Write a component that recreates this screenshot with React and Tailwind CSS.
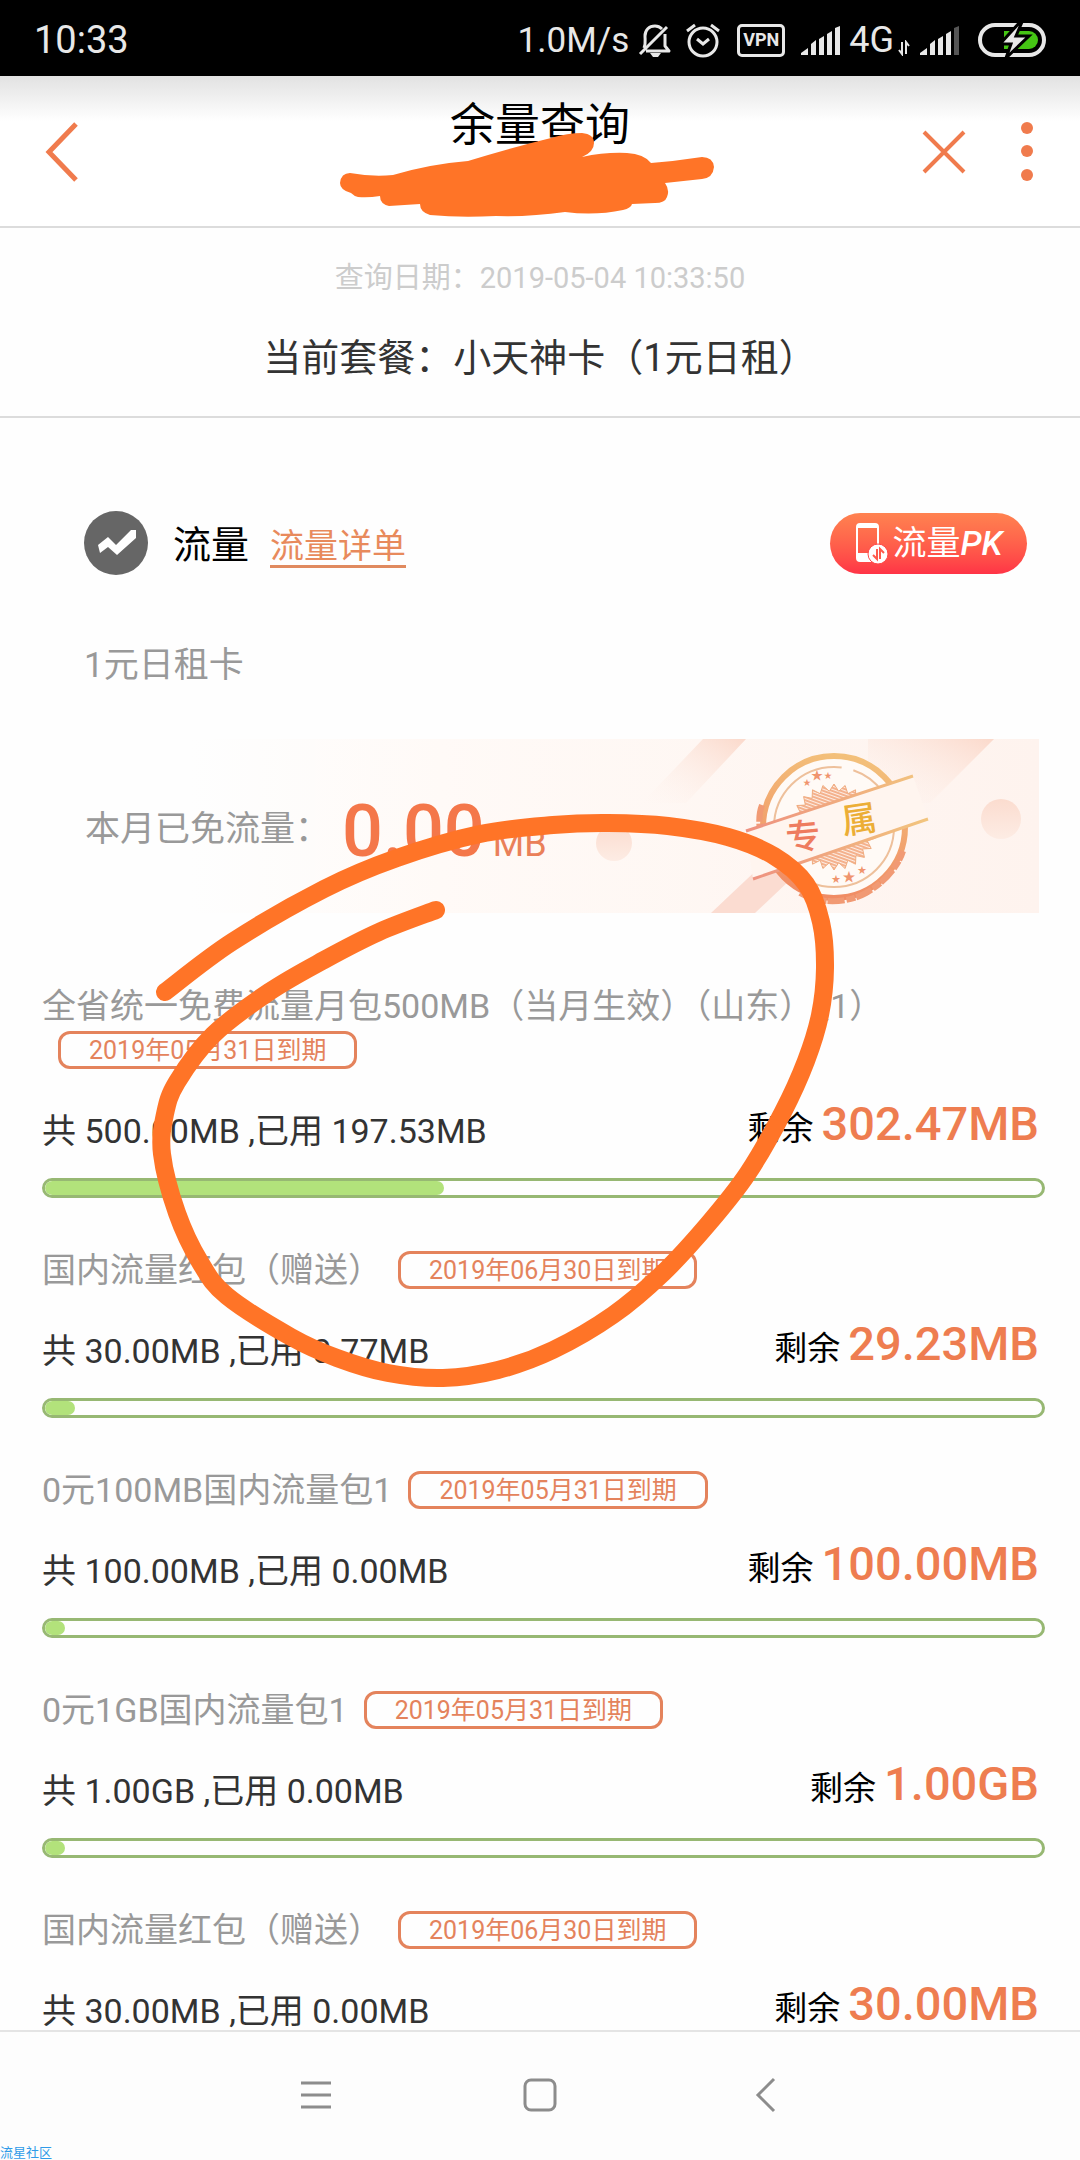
const plans = [
  { name: "全省统一免费流量月包500MB（当月生效）（山东）（1）", expires: "2019年05月31日到期", total: "500.00MB", used: "197.53MB", left: "302.47MB", percent: 40 },
  { name: "国内流量红包（赠送）", expires: "2019年06月30日到期", total: "30.00MB", used: "0.77MB", left: "29.23MB", percent: 3 },
  { name: "0元100MB国内流量包1", expires: "2019年05月31日到期", total: "100.00MB", used: "0.00MB", left: "100.00MB", percent: 0 },
  { name: "0元1GB国内流量包1", expires: "2019年05月31日到期", total: "1.00GB", used: "0.00MB", left: "1.00GB", percent: 0 },
  { name: "国内流量红包（赠送）", expires: "2019年06月30日到期", total: "30.00MB", used: "0.00MB", left: "30.00MB", percent: 0 },
];

const circlePoints = [
  [165, 992], [232, 942], [324, 889], [397, 858], [480, 834], [553, 825], [608, 823],
  [668, 826], [728, 837], [774, 856], [806, 884], [821, 922], [825, 968], [820, 1015],
  [806, 1061], [783, 1112], [748, 1173], [709, 1223], [663, 1273], [613, 1315], [553, 1350],
  [498, 1370], [443, 1378], [388, 1373], [337, 1358], [291, 1337], [227, 1296], [200, 1262],
  [177, 1213], [162, 1154], [165, 1114], [177, 1082], [213, 1035], [269, 992], [324, 960],
  [379, 932], [436, 910],
];

// Catmull-Rom spline through the points, written as cubic beziers
function smoothPath(points) {
  let d = `M${points[0][0]} ${points[0][1]}`;
  for (let i = 0; i < points.length - 1; i++) {
    const p0 = points[i - 1] || points[i];
    const p1 = points[i];
    const p2 = points[i + 1];
    const p3 = points[i + 2] || p2;
    d += ` C${p1[0] + (p2[0] - p0[0]) / 6} ${p1[1] + (p2[1] - p0[1]) / 6}`;
    d += ` ${p2[0] - (p3[0] - p1[0]) / 6} ${p2[1] - (p3[1] - p1[1]) / 6} ${p2[0]} ${p2[1]}`;
  }
  return d;
}

// zig-zag edge of the seal in the middle of the stamp
function sealPoints(cx, cy, outer, inner, teeth) {
  return Array.from({ length: teeth * 2 }, (_, i) => {
    const r = i % 2 ? inner : outer;
    const a = (Math.PI * i) / teeth;
    return `${(cx + r * Math.cos(a)).toFixed(1)},${(cy + r * Math.sin(a)).toFixed(1)}`;
  }).join(" ");
}

function Signal({ weak }) {
  return (
    <svg className="h-8 w-10" viewBox="0 0 40 32" fill="#e8e8e8">
      <path d="M0 31v-2l7-5v7z" />
      <path d="M10 31V20l5-4v15z" />
      <path d="M18 31V15l5-3v19z" />
      <path d="M26 31V10l5-3v24z" />
      <path d="M34 31V4l5-2v29z" fill={weak ? "#555" : "#e8e8e8"} />
    </svg>
  );
}

function StatusBar() {
  return (
    <div className="flex h-[76px] shrink-0 items-center justify-between bg-black pt-1 pr-[34px] pl-[34px] text-[#e8e8e8]">
      <span className="text-[38px] leading-none">10:33</span>
      <div className="flex items-center">
        <span className="text-[35px] leading-none">1.0M/s</span>
        <svg className="ml-2 h-9 w-9" viewBox="0 0 36 36" fill="none" stroke="#e8e8e8" strokeWidth="3">
          <path d="M7 26C9 21 8 18 8 14 8 8 12 4 18 4c3 0 5 1 7 3M28 12v12l4 5H9M30 5L3 32" strokeLinejoin="round" />
          <path d="M13 31h11l-3 4h-5z" fill="#e8e8e8" stroke="none" />
        </svg>
        <svg className="ml-3 h-9 w-9" viewBox="0 0 36 36" fill="none" stroke="#e8e8e8" strokeWidth="3">
          <circle cx="18" cy="20" r="14" />
          <path d="M12 17l6 5 6-5M2 9l8-6M34 9l-8-6" />
        </svg>
        <span className="ml-4 flex h-[33px] w-12 items-center justify-center rounded-[5px] border-[3px] border-[#e8e8e8] text-[18px] leading-none font-bold">
          VPN
        </span>
        <span className="ml-4">
          <Signal />
        </span>
        <span className="ml-2 text-[36px] leading-none">4G</span>
        <svg className="mt-4 ml-1 h-4 w-3" viewBox="0 0 12 16" fill="none" stroke="#e8e8e8" strokeWidth="2">
          <path d="M4 2v12L1 10M8 14V2l3 4" />
        </svg>
        <span className="ml-[10px]">
          <Signal weak />
        </span>
        <svg className="ml-[18px] h-9 w-[68px]" viewBox="0 0 68 36">
          <rect x="2" y="3" width="64" height="30" rx="15" fill="none" stroke="#e8e8e8" strokeWidth="4" />
          <path d="M26 9h25a9 9 0 0 1 0 18H26z" fill="#45c514" />
          <path d="M42 0L22 22h11l-5 14 23-22H38l6-14z" fill="#e8e8e8" stroke="#000" strokeWidth="3" />
        </svg>
      </div>
    </div>
  );
}

function Header() {
  return (
    <header className="flex h-[152px] shrink-0 items-start justify-between border-b-2 border-[#dcdcdc] bg-linear-to-b from-[#e2e2e2] via-white via-30% to-white">
      <button type="button" aria-label="返回" className="mt-10 ml-10 w-[168px]">
        <svg className="h-[72px] w-11" viewBox="0 0 44 72" fill="none" stroke="#f07b4d" strokeWidth="5">
          <path d="M36 8L9 36l27 28" />
        </svg>
      </button>
      <h1 className="mt-5 text-[45px] leading-[60px] text-black">余量查询</h1>
      <div className="mt-10 mr-10 flex w-[168px] justify-end">
        <button type="button" aria-label="关闭">
          <svg className="h-[72px] w-[60px]" viewBox="0 0 60 72" fill="none" stroke="#f07b4d" strokeWidth="4">
            <path d="M10 16l40 40M50 16L10 56" />
          </svg>
        </button>
        <button type="button" aria-label="更多" className="ml-[42px]">
          <svg className="h-[72px] w-6" viewBox="0 0 24 72" fill="#f07b4d">
            <circle cx="11" cy="12" r="6" />
            <circle cx="11" cy="35" r="6" />
            <circle cx="11" cy="59" r="6" />
          </svg>
        </button>
      </div>
    </header>
  );
}

function BannerArt() {
  return (
    <svg className="absolute top-0 right-0 h-full w-[499px]" viewBox="-100 0 499 174">
      <defs>
        <linearGradient id="stripe" x1="1" y1="0" x2="0" y2="1">
          <stop offset="0" stopColor="#fbd9cb" />
          <stop offset="1" stopColor="#fef4ef" stopOpacity="0" />
        </linearGradient>
        <linearGradient id="dot" x1="0" y1="0" x2="0" y2="1">
          <stop offset="0" stopColor="#fbdccf" />
          <stop offset="1" stopColor="#fdece4" />
        </linearGradient>
        <linearGradient id="ink" x1="0.6" y1="0" x2="0.4" y2="1">
          <stop offset="0" stopColor="#f3c07a" />
          <stop offset="1" stopColor="#f08a63" />
        </linearGradient>
        <linearGradient id="band" gradientUnits="userSpaceOnUse" x1="106" y1="0" x2="288" y2="0">
          <stop offset="0" stopColor="#ee9080" />
          <stop offset="1" stopColor="#f2c57e" />
        </linearGradient>
        <pattern id="hatch" width="3" height="3" patternUnits="userSpaceOnUse" patternTransform="rotate(20)">
          <rect width="3" height="3" fill="#fdeee5" />
          <rect width="3" height="2" fill="#f4b18d" />
        </pattern>
      </defs>
      <path d="M63 0h43L46 64H2z" fill="url(#stripe)" />
      <path d="M228 0h126l-64 64h-62z" fill="url(#stripe)" />
      <path d="M71 174h44l55-52h-44z" fill="#fbdcd1" />
      <circle cx="-26" cy="104" r="18" fill="url(#dot)" />
      <circle cx="361" cy="80" r="20" fill="url(#dot)" />
      <circle cx="194" cy="88" r="71" fill="#fffaf6" stroke="url(#ink)" strokeWidth="6" />
      <path d="M122 66c-4 10-3 22-1 32M160 154c16 10 44 12 66 0 18-10 32-26 37-42" fill="none" stroke="#f19a74" strokeWidth="6" strokeDasharray="17 2 9 1" />
      <circle cx="194" cy="88" r="60" fill="none" stroke="#eec09b" strokeWidth="2" strokeDasharray="290 12 75 0" />
      <polygon points={sealPoints(194, 88, 43, 36, 24)} fill="url(#hatch)" stroke="#f0ab7e" strokeWidth="1" />
      <g fill="#f0946d" fontSize="12" textAnchor="middle">
        <text x="167" y="46" fontSize="8">★</text>
        <text x="177" y="41">★</text>
        <text x="188" y="39" fontSize="8">★</text>
        <text x="196" y="143" fontSize="9">★</text>
        <text x="209" y="142" fontSize="13">★</text>
        <text x="222" y="134" fontSize="9">★</text>
      </g>
      <path d="M106 92L273 37L288 80L113 140z" fill="#fff5ef" />
      <path d="M106 92L273 37M113 140L288 80" stroke="url(#band)" strokeWidth="3" />
      <g fontSize="35" fontWeight="500" textAnchor="middle">
        <text x="163" y="110" fill="#ee7c5f" transform="rotate(-5 163 97)">专</text>
        <text x="219" y="93" fill="#ecae36" transform="rotate(-8 219 80)">属</text>
      </g>
    </svg>
  );
}

function DataSection() {
  return (
    <section className="pt-[93px] pr-[41px]">
      <div className="flex h-16 items-center pr-3 pl-[84px]">
        <svg className="h-16 w-16" viewBox="0 0 64 64">
          <circle cx="32" cy="32" r="32" fill="#666" />
          <path d="M14 34l10-8 8 8 15-15h5v8L33 44l-9-8-8 6z" fill="#fff" />
        </svg>
        <h2 className="mt-1 ml-[25px] text-[38px] text-black">流量</h2>
        <a href="#detail" className="mt-2 ml-[21px] border-b-[3px] border-[#e08a5f] text-[34px] leading-[38px] text-[#e88a5c]">
          流量详单
        </a>
        <button
          type="button"
          className="ml-auto flex h-[61px] w-[197px] items-center justify-center rounded-full bg-linear-to-b from-[#ff8250] to-[#ff3346] text-[34px] text-white"
        >
          <svg className="mr-1 h-[42px] w-[34px]" viewBox="0 0 34 42">
            <rect x="2" y="2" width="21" height="37" rx="3" fill="none" stroke="#fff" strokeWidth="2" />
            <path d="M2 2h21v4H2zM2 31h21v8H2z" fill="#fff" />
            <circle cx="23" cy="32" r="10" fill="#fff" stroke="#ff4a49" />
            <path d="M22 27v10l-4-4M25 37V27l4 4" fill="none" stroke="#ff5a4c" strokeWidth="2" />
          </svg>
          流量<i className="font-medium">PK</i>
        </button>
      </div>
      <p className="mt-[67px] pl-[84px] text-[35px] leading-[48px] text-[#999]">1元日租卡</p>
      <div className="relative mt-[49px] ml-[41px] flex h-[174px] items-center bg-linear-to-r from-transparent from-15% via-[#fffaf7] via-40% to-[#fef3ee] pl-11">
        <BannerArt />
        <p className="relative mt-2 flex items-center text-[35px] text-[#999]">
          本月已免流量：
          <span className="mt-4 ml-3 flex items-baseline leading-[80px]">
            <strong className="text-[72px] font-medium text-[#f4774a]">0.00</strong>
            <span className="ml-2 text-[36px] text-[#ea8059]">MB</span>
          </span>
        </p>
      </div>
    </section>
  );
}

function Plan({ plan }) {
  return (
    <li className="mb-[50px]">
      <div className="flex flex-wrap items-center">
        <h3 className="text-[34px] leading-[44px] text-[#999]">{plan.name}</h3>
        <span className="my-[3px] ml-4 flex h-[38px] items-center rounded-xl border-[3px] border-[#e4835c] px-7 text-[25px] leading-none text-[#e4835c]">
          {plan.expires}
        </span>
      </div>
      <div className="mt-[34px] flex h-[50px] items-center justify-between pr-1">
        <p className="text-[34px] leading-[36px] text-[#333]">
          共 {plan.total} ,已用 {plan.used}
        </p>
        <p className="flex items-baseline gap-2 pb-[10px] text-[33px] leading-[40px] text-black">
          剩余
          <strong className="text-[47px] font-medium text-[#ee7d50]">{plan.left}</strong>
        </p>
      </div>
      <div
        role="progressbar"
        aria-label={plan.name}
        aria-valuenow={plan.percent}
        className="mt-[22px] -mr-[2px] h-5 overflow-hidden rounded-full border-[3px] border-[#97b873]"
      >
        <div className="h-full min-w-5 rounded-full bg-[#b2e27b]" style={{ width: `${plan.percent}%` }} />
      </div>
    </li>
  );
}

function NavBar() {
  return (
    <nav className="flex h-[130px] shrink-0 flex-col justify-between border-t-2 border-[#e4e4e4] bg-[#fdfdfd]">
      <div className="mt-[41px] flex justify-center gap-[180px]">
        <button type="button" aria-label="菜单">
          <svg className="h-11 w-11" viewBox="0 0 44 44" stroke="#8c8c8c" strokeWidth="3">
            <path d="M7 10h30M7 22h30M7 34h30" />
          </svg>
        </button>
        <button type="button" aria-label="主页">
          <svg className="h-11 w-11" viewBox="0 0 44 44" fill="none" stroke="#8c8c8c" strokeWidth="3">
            <rect x="7" y="7" width="30" height="30" rx="6" />
          </svg>
        </button>
        <button type="button" aria-label="后退">
          <svg className="h-11 w-11" viewBox="0 0 44 44" fill="none" stroke="#8c8c8c" strokeWidth="3">
            <path d="M32 6L16 22l16 16" />
          </svg>
        </button>
      </div>
      <span className="text-[13px] leading-[14px] text-[#2f9be8]">流星社区</span>
    </nav>
  );
}

function Scribbles() {
  return (
    <svg className="pointer-events-none absolute top-0 left-0 w-full" viewBox="0 0 1080 2160">
      <path
        d="M340 183Q341 173 350 173Q372 177 393 175Q430 164 468 161Q510 148 551 138Q568 133 582 133Q594 134 594 143Q594 152 582 157Q605 152 627 153Q644 154 651 163Q676 161 702 157Q713 157 714 167Q713 178 702 179L665 183Q670 190 667 197Q665 203 655 203L632 204Q631 208 623 210Q595 216 565 212Q530 217 496 216Q460 218 430 215Q420 212 420 204L389 206Q380 204 380 196Q368 198 358 197Q354 196 351 193Q340 190 340 183Z"
        fill="#ff7427"
      />
      <path d={smoothPath(circlePoints)} fill="none" stroke="#ff7427" strokeWidth="18" strokeLinecap="round" />
    </svg>
  );
}

export default function App() {
  return (
    <div className="relative flex h-screen flex-col overflow-hidden bg-[#fefefe] font-[Roboto,'Noto_Sans_CJK_SC',sans-serif]" lang="zh-CN">
      <StatusBar />
      <Header />
      <main className="flex-1 overflow-y-auto [scrollbar-width:none]">
        <section className="border-b-2 border-[#dcdcdc] pt-[30px] pb-[30px] text-center">
          <p className="text-[29px] leading-[40px] text-[#ccc]">查询日期：2019-05-04 10:33:50</p>
          <p className="mt-8 text-[38px] leading-[56px] text-[#333]">当前套餐：小天神卡（1元日租）</p>
        </section>
        <DataSection />
        <ul className="mt-[71px] pr-[37px] pl-[42px]">
          {plans.map((plan, index) => (
            <Plan key={index} plan={plan} />
          ))}
        </ul>
      </main>
      <NavBar />
      <Scribbles />
    </div>
  );
}
